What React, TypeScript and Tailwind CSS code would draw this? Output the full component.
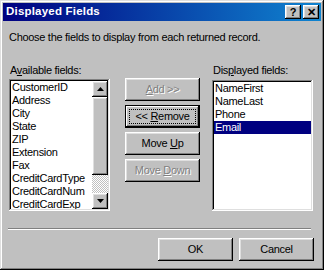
import type { ReactNode } from 'react'

const FONT = '"Liberation Sans", Arial, sans-serif'

const raised =
  'shadow-[inset_-1px_-1px_#000000,inset_1px_1px_#ffffff,inset_-2px_-2px_#808080,inset_2px_2px_#dfdfdf]'
const sunken =
  'shadow-[inset_-1px_-1px_#ffffff,inset_1px_1px_#808080,inset_-2px_-2px_#dfdfdf,inset_2px_2px_#000000]'

const available = [
  'CustomerID',
  'Address',
  'City',
  'State',
  'ZIP',
  'Extension',
  'Fax',
  'CreditCardType',
  'CreditCardNum',
  'CreditCardExp',
]

const displayed = ['NameFirst', 'NameLast', 'Phone', 'Email']

// Win9x push button, optional disabled emboss and focus ring
function Btn({ children, disabled, focused }: { children: ReactNode; disabled?: boolean; focused?: boolean }) {
  return (
    <div
      className={`relative w-[75px] h-[23px] flex items-center justify-center bg-[#c0c0c0] ${
        focused ? 'border border-black shadow-[inset_-1px_-1px_#000000,inset_1px_1px_#ffffff,inset_-2px_-2px_#808080]' : raised
      } ${disabled ? 'text-[#808080] [text-shadow:1px_1px_#ffffff]' : 'text-black'}`}
    >
      {focused && <div className="absolute inset-[3px] border border-dotted border-black" />}
      <span className="relative">{children}</span>
    </div>
  )
}

function TitleBtn({ children }: { children: ReactNode }) {
  return (
    <div className={`w-[16px] h-[14px] bg-[#c0c0c0] ${raised} flex items-center justify-center text-[11px] font-bold leading-none text-black`}>
      {children}
    </div>
  )
}

function ScrollArrow({ up }: { up?: boolean }) {
  return (
    <div className={`w-[16px] h-[16px] bg-[#c0c0c0] ${raised} flex items-center justify-center`}>
      <svg width="7" height="4" viewBox="0 0 7 4">
        {up ? <polygon points="3.5,0 7,4 0,4" fill="#000" /> : <polygon points="0,0 7,0 3.5,4" fill="#000" />}
      </svg>
    </div>
  )
}

export default function App() {
  return (
    <div
      className="w-[324px] h-[270px] bg-[#c0c0c0] p-[3px] flex flex-col text-[11px] tracking-[-0.3px] text-black shadow-[inset_-1px_-1px_#000000,inset_1px_1px_#dfdfdf,inset_-2px_-2px_#808080,inset_2px_2px_#ffffff]"
      style={{ fontFamily: FONT }}
    >
      {/* title bar */}
      <div className="h-[18px] flex items-center pl-[3px] pr-[2px] bg-[linear-gradient(90deg,#000080,#1084d0)]">
        <span className="flex-1 text-white font-bold text-[11.5px] tracking-[0.2px]">Displayed Fields</span>
        <div className="flex">
          <TitleBtn>?</TitleBtn>
          <div className="w-[2px]" />
          <TitleBtn>✕</TitleBtn>
        </div>
      </div>

      <div className="flex flex-col px-[6px]">
        <div className="mt-[10px] h-[13px] leading-[13px]">Choose the fields to display from each returned record.</div>

        <div className="flex mt-[20px]">
          {/* available */}
          <div className="w-[101px] flex flex-col">
            <div className="h-[13px] leading-[13px] pl-[1px] mb-[2px]">
              A<span className="underline">v</span>ailable fields:
            </div>
            <div className={`h-[132px] bg-white ${sunken} p-[2px] flex`}>
              <div className="flex-1 flex flex-col pl-[1px] overflow-hidden">
                {available.map((f) => (
                  <div key={f} className="h-[13px] leading-[13px] whitespace-nowrap">
                    {f}
                  </div>
                ))}
              </div>
              <div className="w-[16px] flex flex-col">
                <ScrollArrow up />
                <div className={`h-[78px] bg-[#c0c0c0] ${raised}`} />
                <div className="flex-1 bg-[repeating-conic-gradient(#c0c0c0_0_25%,#ffffff_0_50%)] bg-[length:2px_2px]" />
                <ScrollArrow />
              </div>
            </div>
          </div>

          {/* buttons */}
          <div className="ml-[15px] mt-[14px] flex flex-col gap-[4px]">
            <Btn disabled>
              <span className="underline">A</span>dd &gt;&gt;
            </Btn>
            <Btn focused>
              &lt;&lt; <span className="underline">R</span>emove
            </Btn>
            <Btn>
              Move <span className="underline">U</span>p
            </Btn>
            <Btn disabled>
              Move <span className="underline">D</span>own
            </Btn>
          </div>

          {/* displayed */}
          <div className="ml-[12px] w-[101px] flex flex-col">
            <div className="h-[13px] leading-[13px] pl-[1px] mb-[3px]">
              Dis<span className="underline">p</span>layed fields:
            </div>
            <div className={`h-[131px] bg-white ${sunken} p-[2px] flex flex-col`}>
              {displayed.map((f) => (
                <div
                  key={f}
                  className={`h-[13px] leading-[13px] pl-[1px] ${f === 'Email' ? 'bg-[#000080] text-white' : ''}`}
                >
                  {f}
                </div>
              ))}
            </div>
          </div>
        </div>

        <div className="mt-[17px] mr-[4px] -ml-[1px] h-[2px] border-t border-[#808080] border-b border-b-white" />

        <div className="mt-[8px] flex justify-end gap-[6px] pr-[1px]">
          <Btn>OK</Btn>
          <Btn>Cancel</Btn>
        </div>
      </div>
    </div>
  )
}
